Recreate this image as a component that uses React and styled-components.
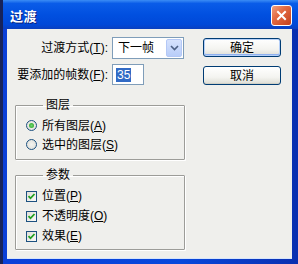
import React from "react";
import styled, { createGlobalStyle } from "styled-components";

const GlobalStyle = createGlobalStyle`
	html, body {
		margin: 0;
		padding: 0;
		background: #17235a;
	}
	body {
		font-family: "Liberation Sans", "Noto Sans CJK SC", sans-serif;
		font-size: 12px;
		color: #000;
	}
`;

const Window = styled.div`
	width: 295px;
	height: 264px;
	margin-left: 3px;
	display: flex;
	flex-direction: column;
	background: linear-gradient(90deg, #0a3fd8 0%, #0848dc 60%, #0a2fb0 100%);
	box-sizing: border-box;
`;

const TitleBar = styled.div`
	height: 29px;
	flex-shrink: 0;
	display: flex;
	align-items: center;
	justify-content: space-between;
	padding: 0 6px 0 7px;
	background: linear-gradient(180deg, #3b8cf5 0%, #0a5ce8 12%, #0150e0 50%, #0048d8 85%, #0a3fbf 100%);
	box-sizing: border-box;
`;

const Title = styled.span`
	color: #fff;
	font-weight: bold;
	font-size: 13px;
	letter-spacing: 0.5px;
	text-shadow: 1px 1px 0 #0a1f7a;
	padding-top: 1px;
`;

const CloseButton = styled.div`
	width: 19px;
	height: 19px;
	border: 1px solid #fff;
	border-radius: 3px;
	background: linear-gradient(135deg, #f0a080 0%, #e36a42 40%, #c4401c 100%);
	display: flex;
	align-items: center;
	justify-content: center;
	margin-top: 1px;
`;

const Body = styled.div`
	flex: 1;
	margin: 0 6px 5px 4px;
	background: #efefec;
	padding: 8px 0 0 8px;
	box-sizing: border-box;
	border-bottom: 1px solid #d6e4fb;
`;

const TopSection = styled.div`
	display: flex;
	align-items: flex-start;
`;

const Form = styled.div`
	display: flex;
	flex-direction: column;
	gap: 5px;
`;

const Row = styled.div`
	display: flex;
	align-items: center;
	height: ${(p) => p.h}px;
`;

const Label = styled.label`
	width: 93px;
	text-align: right;
	margin-right: 4px;
	white-space: nowrap;
	line-height: 14px;
`;

const Select = styled.div`
	width: 72px;
	height: 22px;
	border: 1px solid #7f9db9;
	background: #fff;
	display: flex;
	align-items: center;
	justify-content: space-between;
	box-sizing: border-box;
	padding: 1px 1px 1px 5px;
	line-height: 14px;
`;

const DropButton = styled.div`
	width: 16px;
	height: 18px;
	border-radius: 2px;
	background: linear-gradient(180deg, #d6e2fd 0%, #b8cdf9 100%);
	border: 1px solid #b4c8f6;
	box-sizing: border-box;
	display: flex;
	align-items: center;
	justify-content: center;
`;

const NumberInput = styled.div`
	width: 32px;
	height: 21px;
	border: 1px solid #7f9db9;
	background: #fff;
	box-sizing: border-box;
	display: flex;
	align-items: center;
	padding-left: 3px;
`;

const Selected = styled.span`
	background: #316ac5;
	color: #fff;
	line-height: 14px;
	padding: 0 1px;
`;

const Buttons = styled.div`
	display: flex;
	flex-direction: column;
	gap: 9px;
	margin-left: 19px;
	margin-top: 1px;
`;

const Button = styled.button`
	width: 78px;
	height: 19px;
	padding: 0;
	font: inherit;
	line-height: 14px;
	color: #000;
	border: 1px solid #003c74;
	border-radius: 3px;
	background: linear-gradient(180deg, #ffffff 0%, #f4f4f0 60%, #dcdcd4 100%);
	box-shadow: ${(p) => (p.primary ? "inset 0 0 0 1px #b6d0f8, inset 0 -1px 0 1px #8fb1f0" : "inset 0 -1px 0 #d0d0c6")};
`;

const Group = styled.fieldset`
	width: 170px;
	margin: ${(p) => p.mt}px 0 0 0;
	padding: ${(p) => p.pt}px 0 ${(p) => p.pb}px 10px;
	border: 1px solid #9c9c98;
	box-shadow: 1px 1px 0 #fff, inset 1px 1px 0 #fff;
	border-radius: 1px;
	box-sizing: border-box;
	min-width: 0;
`;

const Legend = styled.legend`
	margin-left: 17px;
	padding: 0 3px;
	line-height: 14px;
	color: #000;
`;

const Option = styled.div`
	display: flex;
	align-items: center;
	height: ${(p) => p.h}px;
	gap: 5px;
	line-height: 14px;
	white-space: nowrap;
`;

const Radio = styled.span`
	width: 11px;
	height: 11px;
	border-radius: 50%;
	border: 1px solid #1c5180;
	background: radial-gradient(circle, #f4f4f0 0%, #dcdcd6 100%);
	box-sizing: border-box;
	display: flex;
	align-items: center;
	justify-content: center;
	&::after {
		content: "";
		width: 5px;
		height: 5px;
		border-radius: 50%;
		background: ${(p) => (p.checked ? "radial-gradient(circle, #6fd46f 0%, #21a121 100%)" : "transparent")};
	}
`;

const Check = styled.span`
	width: 11px;
	height: 11px;
	border: 1px solid #1c5180;
	background: linear-gradient(135deg, #e0e0da 0%, #fafaf8 100%);
	box-sizing: border-box;
	display: flex;
	align-items: center;
	justify-content: center;
`;

const CheckMark = () => (
	<svg width="9" height="9" viewBox="0 0 9 9">
		<path d="M1.5 4.2 L3.5 6.3 L7.5 2" fill="none" stroke="#21a121" strokeWidth="1.8" />
	</svg>
);

export default function App() {
	return (
		<>
			<GlobalStyle />
			<Window>
				<TitleBar>
					<Title>过渡</Title>
					<CloseButton>
						<svg width="11" height="11" viewBox="0 0 11 11">
							<path d="M2 2 L9 9 M9 2 L2 9" stroke="#fff" strokeWidth="2" strokeLinecap="square" />
						</svg>
					</CloseButton>
				</TitleBar>
				<Body>
					<TopSection>
						<Form>
							<Row h={22}>
								<Label>
									过渡方式(<u>T</u>):
								</Label>
								<Select>
									<span>下一帧</span>
									<DropButton>
										<svg width="9" height="6" viewBox="0 0 9 6">
											<path d="M1 1 L4.5 4.5 L8 1" fill="none" stroke="#4d6185" strokeWidth="1.6" />
										</svg>
									</DropButton>
								</Select>
							</Row>
							<Row h={21}>
								<Label>
									要添加的帧数(<u>F</u>):
								</Label>
								<NumberInput>
									<Selected>35</Selected>
								</NumberInput>
							</Row>
						</Form>
						<Buttons>
							<Button primary>确定</Button>
							<Button>取消</Button>
						</Buttons>
					</TopSection>
					<Group mt={13} pt={4} pb={5}>
						<Legend>图层</Legend>
						<Option h={19}>
							<Radio checked />
							<span>
								所有图层(<u>A</u>)
							</span>
						</Option>
						<Option h={19}>
							<Radio />
							<span>
								选中的图层(<u>S</u>)
							</span>
						</Option>
					</Group>
					<Group mt={8} pt={4} pb={3}>
						<Legend>参数</Legend>
						<Option h={20}>
							<Check>
								<CheckMark />
							</Check>
							<span>
								位置(<u>P</u>)
							</span>
						</Option>
						<Option h={20}>
							<Check>
								<CheckMark />
							</Check>
							<span>
								不透明度(<u>O</u>)
							</span>
						</Option>
						<Option h={20}>
							<Check>
								<CheckMark />
							</Check>
							<span>
								效果(<u>E</u>)
							</span>
						</Option>
					</Group>
				</Body>
			</Window>
		</>
	);
}
